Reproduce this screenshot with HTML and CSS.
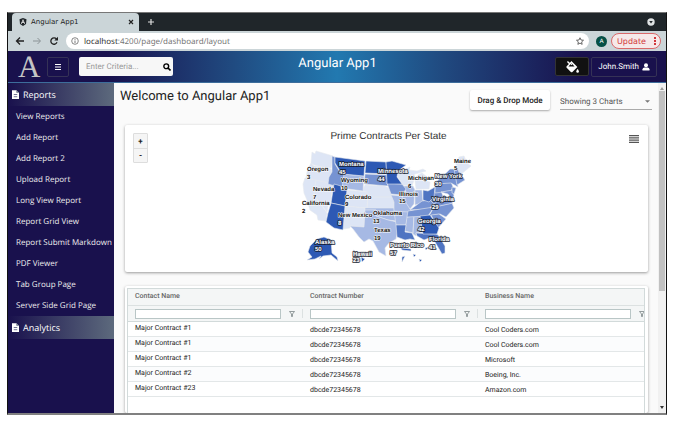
FILE: index.html
```html
<!DOCTYPE html>
<html lang="en">
<head>
<meta charset="utf-8">
<title>Angular App1</title>
<link rel="stylesheet" href="styles.css">
</head>
<body>
<div class="window">
  <div class="tabstrip">
    <div class="tab">
      <svg class="tab-logo" viewBox="0 0 16 16"><path fill="#20262a" d="M8 0l7 2.500-1 9.500-6 4-6-4-1-9.500z"/><path fill="#fff" d="M8 2l4.200 9.500h-1.700l-.8-2.200H6.300l-.8 2.200H3.800zm0 3.300L6.900 8h2.200z"/></svg>
      <span class="tab-title">Angular App1</span>
      <button class="plain" aria-label="Close tab"><svg class="i8" viewBox="0 0 8 8"><path stroke="#222" stroke-width="1.200" d="M2 2l4 4M6 2l-4 4"/></svg></button>
    </div>
    <button class="plain new-tab" aria-label="New tab"><svg class="i8" viewBox="0 0 8 8"><path stroke="#ddd" stroke-width="1.200" d="M4 1v6M1 4h6"/></svg></button>
    <button class="plain tab-search" aria-label="Search tabs"><svg class="i8" viewBox="0 0 8 8"><circle cx="4" cy="4" r="3.700" fill="#e0e3e4"/><path d="M2.200 3h3.600L4 5.500z" fill="#20262a"/></svg></button>
  </div>
  <div class="toolbar">
    <button class="plain" aria-label="Back"><svg class="i10" viewBox="0 0 10 10"><path fill="none" stroke="#222" stroke-width="1.300" d="M9 5H2M5 1.500L1.500 5 5 8.500"/></svg></button>
    <button class="plain" aria-label="Forward"><svg class="i10" viewBox="0 0 10 10"><path fill="none" stroke="#8b9396" d="M1 5h7M5.500 2l3 3-3 3"/></svg></button>
    <button class="plain" aria-label="Reload"><svg class="i10" viewBox="0 0 10 10"><path fill="none" stroke="#222" stroke-width="1.300" d="M8 6.300A3.200 3.200 0 1 1 7.500 3"/><path fill="#222" d="M9 .8v3.700H5.300z"/></svg></button>
    <div class="address">
      <svg class="i8" viewBox="0 0 8 8"><circle cx="4" cy="4" r="3.300" fill="none" stroke="#555" stroke-width=".7"/><path stroke="#555" stroke-width=".8" d="M4 3.500V6M4 2v.8"/></svg>
      <span class="url"><b>localhost</b>:4200/page/dashboard/layout</span>
      <svg class="i8" viewBox="0 0 16 16"><path fill="none" stroke="#444" stroke-width="1.600" d="M8 1.500l2 4.500 5 .5-3.700 3.300 1 4.900L8 12.200l-4.300 2.500 1-4.900L1 6.500 6 6z"/></svg>
    </div>
    <span class="avatar">A</span>
    <button class="update">Update <svg class="dots" viewBox="0 0 2 8"><path fill="#d2373a" d="M0 0h2v2H0zM0 3h2v2H0zM0 6h2v2H0z"/></svg></button>
  </div>
  <header class="header">
    <div class="header-left">
      <span class="brand">A</span>
      <button class="menu" aria-label="Menu"><svg class="i8" viewBox="0 0 8 8"><path stroke="#fff" stroke-width="1.200" d="M1 1.500h6M1 4h6M1 6.500h6"/></svg></button>
      <label class="search">
        <input type="text" placeholder="Enter Criteria..." aria-label="Search criteria">
        <svg class="i8" viewBox="0 0 16 16"><circle cx="6.500" cy="6.500" r="4.800" fill="none" stroke="#000" stroke-width="2.800"/><path stroke="#000" stroke-width="3.200" d="M10 10l5 5"/></svg>
      </label>
    </div>
    <div class="app-title">Angular App1</div>
    <div class="header-right">
      <button class="paint" aria-label="Theme"><svg viewBox="0 0 12 12"><path fill="#fff" fill-rule="evenodd" d="M5 1l5.500 5.500-4.600 4.600q-.7.6-1.400 0L.6 7.200q-.6-.7 0-1.400L2.700 3.700.9 1.900 1.800 1l1.800 1.800zM5 3L2.200 5.900h5.700z"/><path stroke="#fff" stroke-width="1" d="M3.500 2.500l2 2"/><path fill="#fff" d="M10.700 8.300s1.200 1.400 1.200 2.200a1.200 1.200 0 0 1-2.400 0c0-.8 1.200-2.200 1.200-2.200z"/></svg></button>
      <button class="user">John.Smith <svg class="i8" viewBox="0 0 8 8"><circle cx="4" cy="2.300" r="2" fill="#fff"/><path fill="#fff" d="M.5 7.500V6.200Q.6 4.600 2.500 4.600h3Q7.400 4.600 7.500 6.200v1.300z"/></svg></button>
    </div>
  </header>
  <div class="body">
    <nav class="sidebar">
      <a class="section" href="#"><svg class="doc" viewBox="0 0 8 10"><path fill="#fff" d="M0 0h5l3 3v7H0z"/><path fill="#626b80" d="M5 0v3h3z"/><path stroke="#3a3c68" stroke-width=".8" d="M2 5h4M2 7.500h4"/></svg>Reports</a>
      <a class="item" href="#">View Reports</a>
      <a class="item" href="#">Add Report</a>
      <a class="item" href="#">Add Report 2</a>
      <a class="item" href="#">Upload Report</a>
      <a class="item" href="#">Long View Report</a>
      <a class="item" href="#">Report Grid View</a>
      <a class="item" href="#">Report Submit Markdown</a>
      <a class="item" href="#">PDF Viewer</a>
      <a class="item" href="#">Tab Group Page</a>
      <a class="item" href="#">Server Side Grid Page</a>
      <a class="section" href="#"><svg class="doc" viewBox="0 0 8 10"><path fill="#fff" d="M0 0h5l3 3v7H0z"/><path fill="#626b80" d="M5 0v3h3z"/><path stroke="#3a3c68" stroke-width=".8" d="M2 5h4M2 7.500h4"/></svg>Analytics</a>
    </nav>
    <main class="main">
      <div class="page-head">
        <h1>Welcome to Angular App1</h1>
        <button class="drag">Drag &amp; Drop Mode</button>
        <label class="charts">
          <select aria-label="Charts shown"><option>Showing 3 Charts</option></select>
          <svg viewBox="0 0 6 3"><path fill="#777" d="M0 0h6L3 3z"/></svg>
        </label>
      </div>
      <section class="card chart">
        <div class="zoomers"><button>+</button><button>-</button></div>
        <div class="plot">
          <h2>Prime Contracts Per State</h2>
          <svg class="map" viewBox="298 147 182 116">
            <g stroke="#e6e9ef" stroke-width=".6" stroke-linejoin="round">
              <g fill="#dde5f5">
                <path d="M312 152l3 2 1-3 17 5-2 12-8-1-9-2-3-2z"/>
                <path d="M311 163l3 3 9 1 8 2 1 3-3 5v7l-23-6 1-6z"/>
                <path d="M305 178l11 2-2 15 13 18-1 8-8-1-1-5-7-5-3-10-3-7-1-9z"/>
                <path d="M316 180l17 4-3 21-2 1-1 6-13-17z"/>
                <path d="M347 190l21 2-1 16-22-2z"/>
                <path d="M345 206l20 2-1 19-14-1v2l-7 1z"/>
                <path d="M365 185l20 1 5 3 2 8h-24l-1-5-5-1z"/>
                <path d="M368 197h24l2 4v8h-27z"/>
                <path d="M398 170l4-1 10 4 2 7-2 6-9-1-5-8z"/>
                <path d="M416 189l-1-8 3-6 4-2 5 4-1 4 4 1-1 7zM404 170l6-3-1 3 8 1 6-2 3 2-11 3-3 2-3-4z"/>
                <path d="M456 163l3-6 5-1 3 7 4 3-11 9-4-7z"/>
              </g>
              <g fill="#a6b9e4">
                <path d="M343 174l21 2-1 15-22-3z"/>
                <path d="M365 208h29l2 13-8-1-12-4v-6h-11z"/>
                <path d="M365 210h11v6l12 4 9 2v12l-1 5-7 4-4 5 1 8-7-4-6-11-4-2-5 3-5-5-6-8-3-3 14 1z"/>
                <path d="M391 195l11 1 7 10 2 5-1 3-16-1v-11z"/>
                <path d="M394 211l15 1-3 13h-10z"/>
                <path d="M403 186h10l2 4-1 14-4 5-8-12 4-5z"/>
                <path d="M415 190h7l1 11-4 3-4 1z"/>
                <path d="M407 217l7-1-1 17-8-2z"/>
                <path d="M414 216h6l3 16-7 1v3l-3-2z"/>
              </g>
              <g fill="#7693d2">
                <path d="M332 156l3 1v7l5 8 4 2-2 14-14-4 1-7 3-5z"/>
                <path d="M365 174l22 1 1 11-24-2z"/>
                <path d="M387 183l15 1 4 5-4 6-11-1z"/>
                <path d="M410 210l8-6 4-3 8-1 4 3-5 6z"/>
                <path d="M408 211l26-4-6 9-21 1z"/>
                <path d="M434 207l18-4 2 5-8 9-6-3-11 2z"/>
                <path d="M434 192l7-1 2 5-4 6-5 2-4-4z"/>
                <path d="M430 208l14-13 9 8-18 4z"/>
                <path d="M435 184l16-2 2 5-2 4-16 2z"/>
                <path d="M437 181l9-8 4-4h5l3 18-7-4-15 1zM441 192l12-2 1 6-2 3-4-5z"/>
                <path d="M454 169l3-2 3 8 3 2 2 3-8 5zM452 187l4 1-2 6-2-1z"/>
                <path d="M431 215l8-1 7 5-8 9z"/>
              </g>
              <g fill="#4f74c2">
                <path d="M423 190l5 1 7-4-1 10-5 5-6-2z"/>
                <path d="M396 225h10l-1 7 7 1 3 7-5-1-5 1-8-3z"/>
                <path d="M416 233l20 1 2 1 7 11v7l-3 1-7-12-6-4-5 2-7-4z"/>
              </g>
              <g fill="#2d59b4">
                <path d="M335 157l30 4-1 15-21-2-3-3-5-8z"/>
                <path d="M366 161l20 1 1 12-22-1z"/>
                <path d="M386 162l6-1 14 4-8 6-1 6 5 7h-15z"/>
                <path d="M334 184l7 2v3l6 1-2 16-14-3z"/>
                <path d="M331 203l14 3-2 24-9-2-8-6 2-9z"/>
                <path d="M420 216l10-1 9 13-2 6h-14z"/>
                <path d="M310 246l7-7 7-2 7 3 1 13 5 4 1 4-7-6-8 1-4 3 2-3-6 3-8 1 5-3-4-5z"/>
                <path d="M353 250l2 1-1 1zM361 257l4 2-3 3zM401 248l10 1v2l-9-1zM402 257l3-1-3 6zM413 254l3 1-2 2zM425 248l4-1-3 3zM419 259l3 1-2 2z"/>
              </g>
            </g>
            <g class="dark-label">
              <text x="307" y="171">Oregon</text><text x="307" y="179">3</text>
              <text x="313" y="191">Nevada</text><text x="313" y="199">7</text>
              <text x="302" y="205">California</text><text x="302" y="213">2</text>
              <text x="341" y="182">Wyoming</text><text x="341" y="190">10</text>
              <text x="345" y="199">Colorado</text><text x="345" y="206">9</text>
              <text x="373" y="215">Oklahoma</text><text x="373" y="223">13</text>
              <text x="374" y="232">Texas</text><text x="374" y="240">19</text>
              <text x="408" y="180">Michigan</text><text x="408" y="188">6</text>
              <text x="399" y="196">Illinois</text><text x="399" y="203">15</text>
              <text x="454" y="163">Maine</text><text x="454" y="170">5</text>
              <text x="338" y="217">New Mexico</text>
            </g>
            <g class="light-label">
              <text x="339" y="166">Montana</text><text x="339" y="174">45</text>
              <text x="378" y="173">Minnesota</text><text x="378" y="181">44</text>
              <text x="338" y="225">8</text>
              <text x="435" y="178">New York</text><text x="435" y="186">30</text>
              <text x="432" y="201">Virginia</text><text x="432" y="209">29</text>
              <text x="418" y="223">Georgia</text><text x="418" y="231">42</text>
              <text x="429" y="241">Florida</text><text x="429" y="249">41</text>
              <text x="390" y="247">Puerto Rico</text><text x="390" y="255">57</text>
              <text x="315" y="244">Alaska</text><text x="315" y="251">50</text>
              <text x="353" y="256">Hawaii</text><text x="353" y="262">23</text>
            </g>
          </svg>
        </div>
        <button class="plain chart-menu" aria-label="Chart menu"><svg viewBox="0 0 10 8"><path stroke="#555" stroke-width="1.200" d="M0 .7h10M0 2.900h10M0 5.100h10M0 7.300h10"/></svg></button>
      </section>
      <section class="card grid-card">
        <table>
          <thead>
            <tr class="names"><th>Contact Name</th><th>Contract Number</th><th>Business Name</th></tr>
            <tr class="filters">
              <td><div><input type="text" aria-label="Filter contact name"><svg viewBox="0 0 6 6"><path fill="none" stroke="#7c8688" stroke-width=".8" d="M.5.5h5L3.500 3v2.500h-1V3z"/></svg></div></td>
              <td><div><input type="text" aria-label="Filter contract number"><svg viewBox="0 0 6 6"><path fill="none" stroke="#7c8688" stroke-width=".8" d="M.5.5h5L3.500 3v2.500h-1V3z"/></svg></div></td>
              <td><div><input type="text" aria-label="Filter business name"><svg viewBox="0 0 6 6"><path fill="none" stroke="#7c8688" stroke-width=".8" d="M.5.5h5L3.500 3v2.500h-1V3z"/></svg></div></td>
            </tr>
          </thead>
          <tbody>
            <tr><td>Major Contract #1</td><td>dbcde72345678</td><td>Cool Coders.com</td></tr>
            <tr><td>Major Contract #1</td><td>dbcde72345678</td><td>Cool Coders.com</td></tr>
            <tr><td>Major Contract #1</td><td>dbcde72345678</td><td>Microsoft</td></tr>
            <tr><td>Major Contract #2</td><td>dbcde72345678</td><td>Boeing, Inc.</td></tr>
            <tr><td>Major Contract #23</td><td>dbcde72345678</td><td>Amazon.com</td></tr>
          </tbody>
        </table>
      </section>
    </main>
    <div class="scrollbar">
      <svg viewBox="0 0 6 3"><path fill="#999" d="M1 3h4L3 0z"/></svg>
      <span class="thumb"></span>
      <svg viewBox="0 0 6 3"><path fill="#333" d="M1 0h4L3 3z"/></svg>
    </div>
  </div>
</div>
</body>
</html>
```
FILE: styles.css
```css
* { box-sizing: border-box; }
body {
  margin: 0;
  height: 100vh;
  padding: 12px 6px 10px 7px;
  background: #fff;
  font-family: Roboto, sans-serif;
  font-size: 8px;
  color: #222;
  text-rendering: geometricPrecision;
}
button, input, select { font: inherit; color: inherit; margin: 0; padding: 0; text-rendering: inherit; }
svg { display: block; flex: none; }
a { text-decoration: none; }
.plain { border: 0; background: none; }
.i8 { width: 8px; height: 8px; }
.i10 { width: 10px; height: 10px; }

.window {
  display: flex;
  flex-direction: column;
  height: 100%;
  border: 1px solid #111;
  border-top-color: #777;
  border-bottom: 2px solid #808080;
  overflow: hidden;
}

.tabstrip {
  display: flex;
  align-items: center;
  height: 18px;
  padding: 0 11px 0 4px;
  background: #20262a;
  font-family: "DejaVu Sans", sans-serif;
}
.tab {
  display: flex;
  align-items: center;
  gap: 4px;
  width: 127px;
  height: 100%;
  padding: 0 4px 0 7px;
  background: #cbd5d8;
  border-radius: 4px 4px 0 0;
}
.tab-logo { width: 8px; height: 8px; }
.tab-title { flex: 1; font-size: 7px; }
.new-tab { margin-left: 8px; }
.tab-search { margin-left: auto; }

.toolbar {
  display: flex;
  align-items: center;
  gap: 7px;
  height: 20px;
  padding: 0 5px 0 7px;
  background: #cbd5d8;
  font-family: "DejaVu Sans", sans-serif;
}
.address {
  flex: 1;
  display: flex;
  align-items: center;
  gap: 5px;
  height: 16px;
  padding: 0 5px;
  border-radius: 8px;
  background: #fff;
}
.url { flex: 1; color: #777; font-family: "Noto Sans", sans-serif; }
.url b { color: #333; font-weight: normal; }
.avatar {
  width: 11px;
  height: 11px;
  border-radius: 50%;
  background: #065046;
  color: #fff;
  font-size: 6px;
  line-height: 11px;
  text-align: center;
}
.update {
  display: flex;
  align-items: center;
  gap: 8px;
  height: 16px;
  margin-left: -3px;
  padding: 0 4px 0 5px;
  border: 1px solid #d9696a;
  border-radius: 8px;
  background: #f6e9e9;
  color: #d2373a;
}
.dots { width: 2px; height: 8px; }

.header {
  display: grid;
  grid-template-columns: 1fr auto 1fr;
  align-items: center;
  height: 32px;
  padding: 0 9px 0 10px;
  border-bottom: 1px solid #3d6d9b;
  background: linear-gradient(90deg, #19114d 15%, #204a80 34%, #2279b0 50%, #204a80 66%, #19114d 87%);
  color: #fff;
}
.header-left, .header-right { display: flex; align-items: center; }
.header-right { justify-content: flex-end; gap: 2px; }
.brand {
  width: 22px;
  font-family: "Liberation Serif", serif;
  font-size: 31px;
  line-height: 30px;
  color: #c4c4c4;
}
.menu, .user { border: 1px solid #353256; border-radius: 2px; background: none; }
.menu {
  display: grid;
  place-items: center;
  width: 22px;
  height: 20px;
  margin: 0 10px 0 7px;
}
.search {
  display: flex;
  align-items: center;
  width: 94px;
  height: 19px;
  padding: 0 2px 0 7px;
  border-radius: 2px;
  background: #f7f7f7;
}
.search input { flex: 1; min-width: 0; border: 0; background: none; color: #222; }
.search input::placeholder { color: #999; }
.app-title { font-size: 13px; line-height: 16px; padding-bottom: 6px; }
.paint {
  display: grid;
  place-items: center;
  width: 34px;
  height: 19px;
  border: 1px solid #333;
  border-radius: 2px;
  background: #111;
}
.paint svg { width: 13px; height: 13px; }
.user { display: flex; align-items: center; gap: 3px; height: 20px; padding: 0 6px; }

.body { flex: 1; display: flex; min-height: 0; }
.sidebar {
  width: 106px;
  background: #19114d;
  font-family: "Open Sans", "Noto Sans", sans-serif;
}
.section {
  display: flex;
  align-items: center;
  gap: 4px;
  height: 23px;
  padding-left: 4px;
  background: linear-gradient(90deg, #19114d, #5d6a7d);
  color: #fff;
  font-size: 9px;
}
.doc { width: 7px; height: 9px; }
.item { display: block; height: 21px; padding-left: 8px; color: #eee; line-height: 21px; }

.main {
  flex: 1;
  display: flex;
  flex-direction: column;
  min-width: 0;
  padding: 0 10px 0 11px;
  background: #fafafa;
}
.page-head { display: flex; align-items: flex-start; height: 42px; }
h1 { flex: 1; margin: 5px 0 0 -5px; font-size: 13px; line-height: 18px; font-weight: 400; }
.drag {
  width: 80px;
  height: 20px;
  margin-top: 7px;
  border: 0;
  border-radius: 2px;
  background: #fff;
  box-shadow: 0 1px 2px #aaa;
  font-weight: 500;
}
.charts {
  display: flex;
  align-items: center;
  width: 92px;
  height: 16px;
  margin: 11px -4px 0 10px;
  padding-right: 2px;
  border-bottom: 1px solid #aaa;
  color: #555;
}
.charts select { flex: 1; appearance: none; border: 0; background: none; }
.charts svg { width: 5px; height: 3px; }

.card { background: #fff; border-radius: 2px; box-shadow: 0 1px 3px #999; }
.chart { display: flex; align-items: flex-start; height: 147px; flex: none; padding: 8px 9px 0 8px; }
.zoomers { display: flex; flex-direction: column; width: 15px; border: 1px solid #ddd; border-radius: 1px; }
.zoomers button { height: 14px; border: 0; background: #f5f5f5; font-weight: 700; }
.zoomers button + button { border-top: 1px solid #ddd; }
.plot { flex: 1; display: flex; flex-direction: column; align-items: center; }
h2 {
  margin: -3px 0 0;
  font: 10px/14px "Liberation Sans", sans-serif;
  color: #333;
}
.map { width: 182px; height: 116px; margin: 3px 0 0; }
.map text { font: bold 6px "Liberation Sans", sans-serif; paint-order: stroke; stroke-linejoin: round; }
.dark-label text { fill: #111; stroke: #fff; stroke-width: 1px; }
.light-label text { fill: #fff; stroke: rgba(20, 25, 40, .75); stroke-width: 2px; }
.chart-menu { margin-top: 2px; }
.chart-menu svg { width: 10px; height: 8px; }

.grid-card { flex: 1; min-height: 0; margin-top: 14px; padding: 2px 3px 0 2px; overflow: hidden; display: flex; }
table {
  flex: 1;
  display: block;
  overflow: hidden;
  border: 1px solid #d2dada;
  border-bottom: 0;
  border-spacing: 0;
}
th, td { width: 175px; min-width: 175px; padding: 0 0 0 7px; text-align: left; }
.names th {
  height: 17px;
  padding-bottom: 3px;
  background: #f4f6f6;
  border-bottom: 1px solid #dce1e1;
  color: #666;
  font-size: 7px;
  font-weight: 500;
}
.filters td { height: 16px; background: #f4f6f6; border-bottom: 1px solid #d2dada; }
.filters div { display: flex; align-items: center; gap: 8px; height: 9px; border-right: 1px solid #dce1e1; padding-right: 7px; }
.filters input { flex: 1; min-width: 0; height: 10px; border: 1px solid #b9c6c6; background: #fff; }
.filters svg { width: 6px; height: 6px; }
tbody td { height: 15px; padding-top: 3px; border-bottom: 1px solid #e3e7e8; font-size: 7px; line-height: 9px; }
tbody td:first-child { padding: 0 0 1px 7px; }
tbody tr:nth-child(even) { background: #fbfcfd; }

.scrollbar {
  display: flex;
  flex-direction: column;
  align-items: center;
  width: 8px;
  padding: 4px 0;
  background: #f1f1f1;
}
.scrollbar svg { width: 6px; height: 3px; }
.thumb { width: 6px; height: 62%; margin: 1px 0 auto; background: #c1c1c1; }
```
